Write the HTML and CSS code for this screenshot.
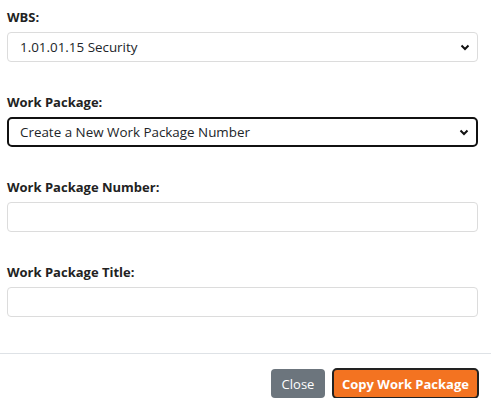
FILE: index.html
```html
<!DOCTYPE html>
<html>
<head>
<meta charset="utf-8">
<link rel="stylesheet" href="styles.css">
</head>
<body>
<div class="modal-body">
  <div class="group">
    <label class="lbl">WBS:</label>
    <select class="ctl">
      <option>1.01.01.15 Security</option>
    </select>
  </div>
  <div class="group">
    <label class="lbl">Work Package:</label>
    <select class="ctl focused">
      <option>Create a New Work Package Number</option>
    </select>
  </div>
  <div class="group">
    <label class="lbl">Work Package Number:</label>
    <input class="ctl" type="text">
  </div>
  <div class="group">
    <label class="lbl">Work Package Title:</label>
    <input class="ctl" type="text">
  </div>
</div>
<div class="modal-footer">
  <button class="btn btn-close">Close</button>
  <button class="btn btn-copy">Copy Work Package</button>
</div>
</body>
</html>
```
FILE: styles.css
```css
html, body {
  margin: 0;
  padding: 0;
  background: #fff;
  font-family: "Open Sans", "Liberation Sans", sans-serif;
  font-size: 13px;
  color: #212529;
}
.modal-body {
  padding: 7px 13px 0 7px;
  display: flex;
  flex-direction: column;
  gap: 30px;
}
.group {
  display: flex;
  flex-direction: column;
}
.lbl {
  font-weight: 700;
  line-height: 20px;
  margin-bottom: 5px;
  color: #222;
}
.ctl {
  box-sizing: border-box;
  height: 30px;
  width: 471px;
  border: 1px solid #dcdcdc;
  border-radius: 4px;
  background: #fff;
  font-family: "Open Sans", "Liberation Sans", sans-serif;
  font-size: 13.4px;
  color: #212529;
  padding: 0 12px;
  outline: none;
  margin: 0;
}
select.ctl {
  appearance: none;
  -webkit-appearance: none;
  background-image: url("data:image/svg+xml,%3Csvg xmlns='http://www.w3.org/2000/svg' width='10' height='7' viewBox='0 0 10 7'%3E%3Cpath d='M1.5 1.5 L5 5 L8.5 1.5' fill='none' stroke='%23111' stroke-width='2'/%3E%3C/svg%3E");
  background-repeat: no-repeat;
  background-position: right 7px center;
  background-size: 10px 7px;
}
.ctl.focused {
  border: 2px solid #111;
  padding-left: 11px;
  border-radius: 5px;
}
.modal-footer {
  margin-top: 36px;
  border-top: 1px solid #dee2e6;
  padding: 15px 13px 0 0;
  display: flex;
  justify-content: flex-end;
  align-items: center;
  gap: 8px;
}
.btn {
  font-family: "Open Sans", "Liberation Sans", sans-serif;
  font-size: 13px;
  height: 29px;
  border-radius: 4px;
  border: none;
  color: #fff;
  padding: 0 11px;
  margin: 0;
  white-space: nowrap;
}
.btn-close {
  background: #6c757d;
  width: 54px;
  padding: 0;
}
.btn-copy {
  background: #f37321;
  font-weight: 700;
  width: 145px;
  padding: 0;
  outline: 2px solid #222;
  outline-offset: -1px;
}
```
